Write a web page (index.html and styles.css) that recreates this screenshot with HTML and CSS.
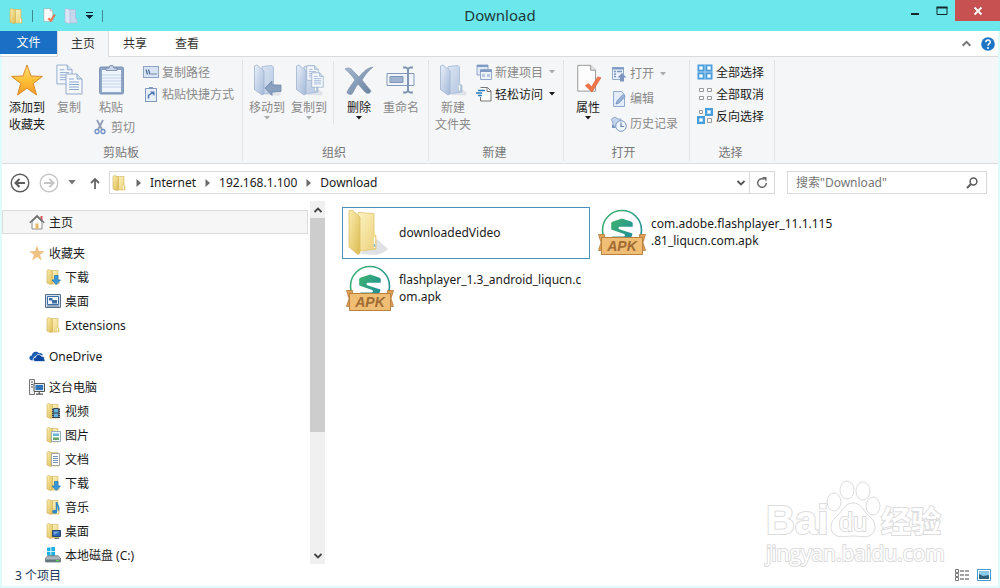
FILE: index.html
```
<!DOCTYPE html>
<html lang="zh-CN">
<head>
    <meta charset="UTF-8">
    <meta name="viewport" content="width=device-width, initial-scale=1.0">
    <title>Download</title>
    <link rel="stylesheet" href="styles.css">
</head>
<body>

<!-- Shared icons -->
<svg class="defs" aria-hidden="true">
    <defs>
        <linearGradient id="gold" x1="0" y1="0" x2="1" y2="1"><stop offset="0" stop-color="#fbeeb0"/><stop offset="1" stop-color="#dcb94f"/></linearGradient>
        <linearGradient id="goldBack" x1="0" y1="0" x2="1" y2="1"><stop offset="0" stop-color="#fdf3c1"/><stop offset="1" stop-color="#ebd07a"/></linearGradient>
        <linearGradient id="steel" x1="0" y1="0" x2="1" y2="1"><stop offset="0" stop-color="#e9f0f9"/><stop offset="1" stop-color="#a3b8d8"/></linearGradient>
        <linearGradient id="steelBack" x1="0" y1="0" x2="1" y2="1"><stop offset="0" stop-color="#d9e4f2"/><stop offset="1" stop-color="#b4c6e0"/></linearGradient>
        <linearGradient id="starFill" x1="0" y1="0" x2="0" y2="1"><stop offset="0" stop-color="#ffe27c"/><stop offset=".5" stop-color="#fdc038"/><stop offset="1" stop-color="#f59a23"/></linearGradient>
        <linearGradient id="teal" x1="0" y1="0" x2="1" y2="1"><stop offset="0" stop-color="#3fb56d"/><stop offset="1" stop-color="#1b85a0"/></linearGradient>
        <linearGradient id="cross" x1="0" y1="0" x2="1" y2="1"><stop offset="0" stop-color="#a9b9cf"/><stop offset="1" stop-color="#65809f"/></linearGradient>

        <symbol id="folder" viewBox="0 0 16 16">
            <path d="M6 1.500h7v9l1 .5v4H6z" fill="url(#goldBack)" stroke="#d5b65e" stroke-width=".6"/>
            <path d="M2 1.500 3.500.5 7.500 2v12.500L5.500 15.500 2 14z" fill="url(#gold)" stroke="#cfae50" stroke-width=".6"/>
            <path d="M12.500 11v3.500" stroke="#fff" stroke-width=".8"/>
        </symbol>
        <symbol id="folder-pale" viewBox="0 0 16 16">
            <path d="M6 1.500h6.500v9l1.500.5v4H6z" fill="#c5d6ee" stroke="#a9bcdc" stroke-width=".7"/>
            <path d="M2 1.500 3.500.5 7 2v12.500L5.500 15.500 2 14z" fill="#dbe5f5" stroke="#a9bcdc" stroke-width=".7"/>
        </symbol>
        <symbol id="folder-steel" viewBox="0 0 32 32">
            <path d="M13 31l16 .5 1-3-5-3z" fill="#dfe3e8"/>
            <path d="M11 2.500 21 1.500 22.500 3v17l2.500 1.500V28L12 30z" fill="url(#steelBack)" stroke="#a4b7d3" stroke-width=".8"/>
            <path d="M3.500 2 6 1l7 6v22.500L11 31 3.500 25.500z" fill="url(#steel)" stroke="#9db1cf" stroke-width=".8"/>
            <path d="M22.500 21.500V26" stroke="#fff" stroke-width="1.200"/>
        </symbol>
        <symbol id="page-steel" viewBox="0 0 18 22">
            <path d="M1 1h11l5 5v15H1z" fill="#f4f8fd" stroke="#93a9c9"/>
            <path d="M12 1v5h5" fill="#d5e0f0" stroke="#93a9c9"/>
            <path d="M4 6h5M4 9h10M4 11.500h10M4 14h10M4 16.500h10" stroke="#8ea8cd" stroke-width="1"/>
        </symbol>
        <symbol id="properties" viewBox="0 0 32 36">
            <path d="M4.500 1.500H19L24.500 7v23.500h-20z" fill="#fdfdfd" stroke="#8d8d8d"/>
            <path d="M19 1.500V7h5.500" fill="#e5e5e5" stroke="#8d8d8d"/>
            <path d="M13 24.500l3.500-2.500 3.500 3.500L27 14.500l3.500 1L20.500 31.500z" fill="#f0764a" stroke="#d9572c" stroke-width=".7"/>
        </symbol>
        <symbol id="star" viewBox="0 0 32 32">
            <path d="M16 1l4 11 11.500.4-9.200 7L25.500 31 16 24.200 6.500 31l3.200-11.600L.5 12.400 12 12z" stroke-linejoin="round"/>
        </symbol>
        <symbol id="down-arrow" viewBox="0 0 16 16">
            <path d="M9.500 6.500h3.500V11h2.500L11.200 15.500 7 11h2.500z" fill="#3a9bdc" stroke="#1d70ae" stroke-width=".7"/>
        </symbol>
        <symbol id="chevron" viewBox="0 0 10 10">
            <path d="M1.500 3 5 6.500 8.500 3" fill="none" stroke="currentColor" stroke-width="1.800"/>
        </symbol>
        <symbol id="caret" viewBox="0 0 6 4"><path d="M0 0h6L3 3.500z" fill="currentColor"/></symbol>
        <symbol id="crumb" viewBox="0 0 5 8"><path d="M.5 0v8L5 4z" fill="#6a6a6a"/></symbol>
        <symbol id="apk" viewBox="0 0 48 48">
            <circle cx="24" cy="21" r="19.500" fill="#fff" stroke="url(#teal)" stroke-width="1.600"/>
            <path d="M24 9.500l9 3c1.300.5 1.700 1 1.700 2v3.300H22c-2 0-2 2.200 0 2.800l12.500 4c-.5 5-5.500 8.400-10.500 10.400-5-2-8.500-4-10-7.500h11.500c2 0 2-2 0-2.700L13.200 20.500v-6c0-1 .4-1.500 1.700-2z" fill="url(#teal)"/>
            <path d="M.5 25.500h6v16h-6l2.500-8zM47.500 25.500h-6v16h6l-2.500-8z" fill="#dfa055" stroke="#b57b3a" stroke-width=".8"/>
            <path d="M3.500 28.500h41v17h-41z" fill="#efbd74" stroke="#bb8140"/>
            <text x="24" y="42" text-anchor="middle" class="apk-text">APK</text>
        </symbol>
    </defs>
</svg>

<div class="window">
    <header class="titlebar">
        <div class="quick">
            <svg class="i16"><use href="#folder"/></svg>
            <span class="bar"></span>
            <button aria-label="属性"><svg class="i16"><use href="#properties"/></svg></button>
            <button aria-label="新建文件夹"><svg class="i16"><use href="#folder-pale"/></svg></button>
            <button aria-label="自定义快速访问工具栏">
                <svg width="9" height="8" viewBox="0 0 9 8"><path d="M1 .5h7" stroke="#123"/><path d="M.5 3h8L4.500 7z" fill="#123"/></svg>
            </button>
            <span class="bar"></span>
        </div>
        <h1>Download</h1>
        <div class="controls">
            <button aria-label="最小化"><svg width="10" height="10"><path d="M1 8h8" stroke="#12282a" stroke-width="2"/></svg></button>
            <button aria-label="最大化"><svg width="12" height="10"><path d="M1 1.500h10v7H1z" fill="none" stroke="#12282a"/><path d="M.5 1.500h11" stroke="#12282a" stroke-width="2"/></svg></button>
            <button class="close" aria-label="关闭"><svg width="10" height="10"><path d="M1.500 1.500l7 7M8.500 1.500l-7 7" stroke="#fff" stroke-width="1.800"/></svg></button>
        </div>
    </header>

    <div class="tabs">
        <button class="tab file">文件</button>
        <button class="tab active">主页</button>
        <button class="tab">共享</button>
        <button class="tab">查看</button>
        <div class="tabs-right">
            <button aria-label="最小化功能区"><svg class="flip grey" width="11" height="11"><use href="#chevron"/></svg></button>
            <button aria-label="帮助">
                <svg width="14" height="14" viewBox="0 0 14 14"><circle cx="7" cy="7" r="6.800" fill="#1d74c4"/><path d="M4.800 5.300c0-3 4.500-3 4.500-.3C9.300 6.700 7 6.700 7 8.700" fill="none" stroke="#fff" stroke-width="1.500"/><circle cx="7" cy="10.900" r="1" fill="#fff"/></svg>
            </button>
        </div>
    </div>

    <div class="ribbon">
        <section class="group clipboard">
            <div class="tools">
                <button class="big">
                    <svg class="i32" fill="url(#starFill)" stroke="#d98a2b"><use href="#star"/></svg>
                    <span>添加到<br>收藏夹</span>
                </button>
                <button class="big off">
                    <svg class="i32" viewBox="0 0 32 32"><use href="#page-steel" x="3" y="0" width="17" height="21"/><use href="#page-steel" x="12" y="9" width="18" height="22"/></svg>
                    <span>复制</span>
                </button>
                <div class="stack">
                    <button class="big off">
                        <svg class="i32" viewBox="0 0 32 32">
                            <rect x="4.500" y="3" width="24" height="27" rx="1.500" fill="#8fa5c6" stroke="#7d94b8"/>
                            <path d="M7 6h19v22H7z" fill="#eff5fc"/>
                            <path d="M7 11h19M7 14h19M7 17h19M7 20h19M7 23h19" stroke="#c3d3e8"/>
                            <path d="M11 6.500V4h3l1-2.500h3L19 4h3v2.500z" fill="#c9d4e4" stroke="#7186a8" stroke-width=".8"/>
                        </svg>
                        <span>粘贴</span>
                    </button>
                    <button class="small off cut">
                        <svg class="i16" viewBox="0 0 16 16" fill="none"><path d="M5 1l5 9.500M11 1L6 10.500" stroke="#8f9db5" stroke-width="1.800"/><circle cx="5" cy="12.500" r="2" stroke="#6f8fc6" stroke-width="1.300"/><circle cx="11" cy="12.500" r="2" stroke="#6f8fc6" stroke-width="1.300"/></svg>
                        剪切
                    </button>
                </div>
                <div class="list">
                    <button class="small off">
                        <svg class="i16" viewBox="0 0 16 16"><rect x=".5" y="2.500" width="15" height="11" fill="#d8e3f3" stroke="#8ea3c4"/><path d="M3 5.500l1.500 5M5.500 5.500l1.500 5" stroke="#4d6a99" stroke-width="1.200"/><path d="M8.500 10h1M10.500 10h1M12.500 10h1" stroke="#4d6a99" stroke-width="1.400"/></svg>
                        复制路径
                    </button>
                    <button class="small off">
                        <svg class="i16" viewBox="0 0 16 16"><rect x="2.500" y="2.500" width="11" height="13" fill="#e6eefa" stroke="#8299c0"/><path d="M6 1h4v2H6z" fill="#8299c0"/><path d="M5.500 12.500V9.500L9 7" fill="none" stroke="#4f73b3" stroke-width="1.500"/><path d="M7 5.500h4.500V10z" fill="#4f73b3"/></svg>
                        粘贴快捷方式
                    </button>
                </div>
            </div>
            <h2>剪贴板</h2>
        </section>

        <section class="group organize">
            <div class="tools">
                <button class="big off">
                    <svg class="i32" viewBox="0 0 32 32"><use href="#folder-steel" width="32" height="32"/><path d="M14 24l7-7v4h9v6.500h-9v4z" fill="#8ba1c0" stroke="#7089ad" stroke-width=".8"/></svg>
                    <span>移动到</span>
                    <svg class="caret"><use href="#caret"/></svg>
                </button>
                <button class="big off">
                    <svg class="i32" viewBox="0 0 32 32"><use href="#folder-steel" width="32" height="32"/><use href="#page-steel" x="13" y="1" width="13" height="16"/><use href="#page-steel" x="18" y="8" width="13" height="16"/></svg>
                    <span>复制到</span>
                    <svg class="caret"><use href="#caret"/></svg>
                </button>
                <span class="divider"></span>
                <button class="big">
                    <svg class="i32" viewBox="0 0 32 32"><path d="M2 5c3-2 6-1 8 2l6 6c4-5 8-9 14-10-5 4-8 8-11 13 3 4 6 7 9 11-1 3-4 3-6 1l-7-8c-3 4-4 7-6 10-2 1-5 0-5-2 2-4 5-8 8-12C9 12 6 8 2 5z" fill="url(#cross)" stroke="#7389a9" stroke-width=".6"/></svg>
                    <span>删除</span>
                    <svg class="caret"><use href="#caret"/></svg>
                </button>
                <button class="big off">
                    <svg class="i32" viewBox="0 0 32 32"><path d="M2 9.500h27v12H2z" fill="#eff4fa" stroke="#8498b8"/><path d="M5 12.500h13v6H5z" fill="#9fb3d1" stroke="#8097bb"/><path d="M18 3.500h3l2 1.500 2-1.500h3M18 28.500h3l2-1.500 2 1.500h3M23 5v22" fill="none" stroke="#7f95b8" stroke-width="2"/></svg>
                    <span>重命名</span>
                </button>
            </div>
            <h2>组织</h2>
        </section>

        <section class="group new">
            <div class="tools">
                <button class="big off">
                    <svg class="i32"><use href="#folder-steel"/></svg>
                    <span>新建<br>文件夹</span>
                </button>
                <div class="list">
                    <button class="small off">
                        <svg class="i16" viewBox="0 0 16 16"><path d="M1 1h11v10H1z" fill="#dfe9f6" stroke="#93a9cb"/><path d="M1 2h11" stroke="#7f9ac4" stroke-width="2"/><path d="M4.500 5.500h11v10h-11z" fill="#edf3fb" stroke="#93a9cb"/><path d="M4 7h12" stroke="#7f9ac4" stroke-width="2"/><path d="M6 10h3v3H6zM11 10h3v3h-3z" fill="#b7c8e2"/></svg>
                        新建项目
                        <svg class="caret"><use href="#caret"/></svg>
                    </button>
                    <button class="small">
                        <svg class="i16" viewBox="0 0 16 16"><path d="M4.500 1.500h7l3.500 3.500v10H4.500V11" fill="#fff" stroke="#777"/><path d="M11 1.500V5.500h4" fill="none" stroke="#777"/><path d="M2 4.500h7M0 7h6M2 9.500h4" stroke="#287ab8" stroke-width="1.400"/></svg>
                        轻松访问
                        <svg class="caret"><use href="#caret"/></svg>
                    </button>
                </div>
            </div>
            <h2>新建</h2>
        </section>

        <section class="group open">
            <div class="tools">
                <button class="big">
                    <svg class="i32"><use href="#properties"/></svg>
                    <span>属性</span>
                    <svg class="caret"><use href="#caret"/></svg>
                </button>
                <div class="list wide">
                    <button class="small off">
                        <svg class="i16" viewBox="0 0 16 16"><path d="M1.500 1.500h11v12h-11z" fill="#eaf1fa" stroke="#93a9cb"/><path d="M1 2.500h12" stroke="#7f9ac4" stroke-width="2"/><path d="M3 5.500h2M3 8h2M3 10.500h2M6 5.500h5" stroke="#7c98c5" stroke-width="1.300"/><path d="M11 7l4.500 4.500H13V15.500H9v-4H6.500z" fill="#7c95bf"/></svg>
                        打开
                        <svg class="caret"><use href="#caret"/></svg>
                    </button>
                    <button class="small off">
                        <svg class="i16" viewBox="0 0 16 16"><path d="M2.500.5h8l3 3v12h-11z" fill="#e3ecf8" stroke="#93a9cb"/><path d="M5 13l1-3 6-6.500 2 2L8 12z" fill="#9bb3d8" stroke="#6f8dbb" stroke-width=".8"/></svg>
                        编辑
                    </button>
                    <button class="small off">
                        <svg class="i16" viewBox="0 0 16 16"><path d="M.5 3L4 1l3 2h3v7l-7 1z" fill="#c2d3ea" stroke="#93a9cb"/><circle cx="10" cy="10" r="5.300" fill="#eef4fc" stroke="#7f98c2"/><path d="M10 6.500V10.500h3" fill="none" stroke="#6482b3" stroke-width="1.200"/><path d="M1 8v4h4z" fill="#7f98c2"/></svg>
                        历史记录
                    </button>
                </div>
            </div>
            <h2>打开</h2>
        </section>

        <section class="group select">
            <div class="tools">
                <div class="list">
                    <button class="small">
                        <svg class="i16" viewBox="0 0 16 16"><path d="M.5.5h15v15H.5z" fill="#4a9ddb"/><path d="M8 0v16M0 8h16" stroke="#a8d1f2" stroke-width="1"/><path d="M2.500 2.500h3v3h-3zM10.500 2.500h3v3h-3zM2.500 10.500h3v3h-3zM10.500 10.500h3v3h-3z" fill="#fff" stroke="#b5dbf7"/></svg>
                        全部选择
                    </button>
                    <button class="small">
                        <svg class="i16" viewBox="0 0 16 16"><path d="M2.500 2.500h4v3h-4zM10.500 2.500h4v3h-4zM2.500 10.500h4v3h-4zM10.500 10.500h4v3h-4z" fill="#fff" stroke="#999"/></svg>
                        全部取消
                    </button>
                    <button class="small">
                        <svg class="i16" viewBox="0 0 16 16"><path d="M8 0h8v8H8zM0 8h8v8H0z" fill="#4a9ddb"/><path d="M10.500 2.500h3v3h-3zM2.500 10.500h3v3h-3z" fill="#fff" stroke="#b5dbf7"/><path d="M2.500 2.500h3v3h-3zM10.500 10.500h4v4h-4z" fill="#fff" stroke="#999"/></svg>
                        反向选择
                    </button>
                </div>
            </div>
            <h2>选择</h2>
        </section>
    </div>

    <div class="location">
        <button aria-label="返回"><svg width="20" height="20" viewBox="0 0 20 20" fill="none" stroke="#5c5c5c"><circle cx="10" cy="10" r="8.800" stroke-width="1.400"/><path d="M15 10H6M9.500 6L5.500 10l4 4" stroke-width="2"/></svg></button>
        <button aria-label="前进"><svg width="20" height="20" viewBox="0 0 20 20" fill="none" stroke="#c6c6c6"><circle cx="10" cy="10" r="8.800" stroke-width="1.400"/><path d="M5 10h9M10.500 6l4 4-4 4" stroke-width="2"/></svg></button>
        <button class="recent" aria-label="最近浏览的位置"><svg width="8" height="5"><use href="#caret"/></svg></button>
        <button class="up" aria-label="上移"><svg width="10" height="12" viewBox="0 0 10 12"><path d="M5 12V2M1 6l4-4 4 4" fill="none" stroke="#666" stroke-width="1.800"/></svg></button>
        <nav class="address">
            <svg class="i16"><use href="#folder"/></svg>
            <svg class="crumb"><use href="#crumb"/></svg>
            <a href="#">Internet</a>
            <svg class="crumb"><use href="#crumb"/></svg>
            <a href="#">192.168.1.100</a>
            <svg class="crumb"><use href="#crumb"/></svg>
            <a href="#">Download</a>
            <button class="history" aria-label="以前的位置"><svg width="10" height="10"><use href="#chevron"/></svg></button>
            <button class="refresh" aria-label="刷新">
                <svg width="12" height="12" viewBox="0 0 12 12"><path d="M8 2.200A4.300 4.300 0 1 0 10.300 6" fill="none" stroke="#6a6a6a" stroke-width="1.500"/><path d="M6 0h4.500v4.500z" fill="#6a6a6a"/></svg>
            </button>
        </nav>
        <form class="search">
            <input type="text" placeholder='搜索"Download"' aria-label="搜索">
            <button type="button" aria-label="搜索"><svg width="12" height="12" viewBox="0 0 12 12" fill="none" stroke="#5c5c5c"><circle cx="7.500" cy="4.500" r="3.400" stroke-width="1.500"/><path d="M5 7L1 11" stroke-width="2"/></svg></button>
        </form>
    </div>

    <main class="content">
        <nav class="tree">
            <ul>
                <li class="home"><a href="#">
                    <svg class="i16" viewBox="0 0 16 16"><path d="M11.500 2h2v4h-2z" fill="#d9534f"/><path d="M3 8v7h10V8L8 3z" fill="#fff" stroke="#8a8a8a"/><path d="M.8 8.800L8 1.800l7.200 7" fill="none" stroke="#6e6e6e" stroke-width="1.400"/><path d="M6.500 9.500h3V15h-3z" fill="#e9b86a"/></svg>
                    主页</a></li>
                <li class="root"><a href="#"><svg class="i16" fill="#edc284"><use href="#star"/></svg>收藏夹</a></li>
                <li><a href="#"><svg class="i16"><use href="#folder"/><use href="#down-arrow"/></svg>下载</a></li>
                <li><a href="#">
                    <svg class="i16" viewBox="0 0 16 16"><path d="M.5 1.500h15v13H.5z" fill="#d6e1ee" stroke="#55708f"/><path d="M2.500 3.500h11v8h-11z" fill="#f2f6fb" stroke="#3c6ea5"/><path d="M4 5h3.500v2.500H4zM7 7h5v3.500H7z" fill="#3c6ea5"/><path d="M2 13h12" stroke="#55708f"/></svg>
                    桌面</a></li>
                <li><a href="#"><svg class="i16"><use href="#folder"/></svg>Extensions</a></li>
                <li class="root"><a href="#">
                    <svg class="i16" viewBox="0 0 16 16"><path d="M3.500 12.500C-.5 12.500-.5 8 2.800 7.600 3 3.500 8 2.500 9.800 5.200 12 4.500 14 6 13.800 7.500L9 6.500 5 9z" fill="#1b5cb0"/><path d="M6.500 13.500c-3-.3-2.800-4 0-4.200.3-3.400 5-3.600 6-1 3-.2 3.500 2 2.400 2.400 1.800.8 1.300 2.800-.4 2.800z" fill="#0d47a0" stroke="#fff" stroke-width=".7"/></svg>
                    OneDrive</a></li>
                <li class="root"><a href="#">
                    <svg class="i16" viewBox="0 0 16 16"><path d="M.5.5h5v15h-5z" fill="#f2f2f2" stroke="#777"/><path d="M2 3h2M2 5.500h2M2 8h2" stroke="#555"/><path d="M5 4.500h10.500v8H5z" fill="#dce8f5" stroke="#555"/><path d="M6.500 6h7.500v5H6.500z" fill="#2f72b8"/><path d="M10.200 12.500V15M7 15.200h7" stroke="#555" stroke-width="1.200"/></svg>
                    这台电脑</a></li>
                <li><a href="#"><svg class="i16" viewBox="0 0 16 16"><use href="#folder"/><path d="M7 5h8v10H7z" fill="#35424c"/><path d="M9 6h4v3.500H9zM9 10.500h4V14H9z" fill="#62b1dc"/><path d="M7.800 5v10M14.200 5v10" stroke="#eee" stroke-width=".8" stroke-dasharray="1"/></svg>视频</a></li>
                <li><a href="#"><svg class="i16" viewBox="0 0 16 16"><use href="#folder"/><path d="M6.500 4.500h9v10h-9z" fill="#f2f9fd" stroke="#98adb9"/><path d="M8 6.500h6v2.500H8z" fill="#63b5d4"/><path d="M8 10.500h6V13H8z" fill="#68a66b"/></svg>图片</a></li>
                <li><a href="#"><svg class="i16" viewBox="0 0 16 16"><use href="#folder"/><path d="M6.500 2.500h8v12h-8z" fill="#fff" stroke="#a5a5a5"/><path d="M8 5.500h5M8 7.500h5M8 9.500h5M8 11.500h5" stroke="#7692b9"/></svg>文档</a></li>
                <li><a href="#"><svg class="i16"><use href="#folder"/><use href="#down-arrow"/></svg>下载</a></li>
                <li><a href="#"><svg class="i16" viewBox="0 0 16 16"><use href="#folder"/><path d="M11.500 3.500c0 2.500 3.500 3.500 2 8" fill="none" stroke="#2e88c4" stroke-width="1.500"/><path d="M11.500 3v9.500" stroke="#2e88c4" stroke-width="1.500"/><ellipse cx="9.700" cy="12.700" rx="2.600" ry="2" fill="#2e88c4"/></svg>音乐</a></li>
                <li><a href="#"><svg class="i16" viewBox="0 0 16 16"><use href="#folder"/><path d="M7.500 7.500h8v6h-8z" fill="#2c66b4" stroke="#2b4466"/><path d="M8.500 8.500h6L9 12z" fill="#76a7df"/><path d="M9.500 15.300h4.500" stroke="#456"/></svg>桌面</a></li>
                <li><a href="#"><svg class="i16" viewBox="0 0 16 16"><path d="M2 .8l3.500-.5v4H2zM6.300.2 10-.3v4.600H6.300zM2 5h3.500v4L2 8.600zM6.300 5H10v4.600L6.300 9.200z" fill="#18b1e0"/><path d="M.5 11L3 8.800h10l2.500 2.200v4H.5z" fill="#aab5bb" stroke="#68747a" stroke-width=".8"/><path d="M1 12.500h14v2.200H1z" fill="#62727a"/><path d="M11 13.600h3" stroke="#4fd54a" stroke-width="1.300"/></svg>本地磁盘 (C:)</a></li>
            </ul>
            <div class="scrollbar">
                <button aria-label="向上滚动"><svg class="flip" width="10" height="10"><use href="#chevron"/></svg></button>
                <div class="track"><div class="thumb"></div></div>
                <button aria-label="向下滚动"><svg width="10" height="10"><use href="#chevron"/></svg></button>
            </div>
        </nav>

        <ul class="files">
            <li><a class="item selected" href="#">
                <svg class="i48" viewBox="0 0 48 48">
                    <path d="M14 45l16 1c5-1 9-3 12-6L31 30z" fill="#dfe1e4"/>
                    <path d="M12 3.500L28 4.500V25l2 2v13L14 42z" fill="url(#goldBack)" stroke="#e0c56e" stroke-width=".8"/>
                    <path d="M3 2l3-1 8 7v36l-2 1.500L3 38z" fill="url(#gold)" stroke="#dcc068" stroke-width=".8"/>
                    <path d="M28.500 28v11" stroke="#fff" stroke-width="1.400"/>
                    <path d="M28.500 35v3" stroke="#8db9d0" stroke-width="1.400"/>
                </svg>
                <span>downloadedVideo</span></a></li>
            <li><a class="item" href="#"><svg class="i48"><use href="#apk"/></svg><span>com.adobe.flashplayer_11.1.115<br>.81_liqucn.com.apk</span></a></li>
            <li><a class="item" href="#"><svg class="i48"><use href="#apk"/></svg><span>flashplayer_1.3_android_liqucn.c<br>om.apk</span></a></li>
        </ul>
    </main>

    <footer class="status">
        <span>3 个项目</span>
        <div class="views">
            <button aria-label="详细信息"><svg width="16" height="12" viewBox="0 0 16 12"><path d="M1.500.5h3v3h-3zM1.500 4.500h3v3h-3zM1.500 8.500h3v3h-3z" fill="#fff" stroke="#777"/><path d="M6 2h4M11 2h4M6 6h4M11 6h4M6 10h4M11 10h4" stroke="#444"/></svg></button>
            <button aria-label="大图标"><svg width="14" height="12" viewBox="0 0 14 12"><path d="M.5.5h13v11H.5z" fill="#fff" stroke="#4a9ad0"/><path d="M2 2h10v8H2z" fill="#8cc8e8"/><path d="M2 5l4 2 6-1v4H2z" fill="#2d6178"/></svg></button>
        </div>
    </footer>

    <svg class="watermark" width="190" height="92" viewBox="0 0 190 92" aria-hidden="true">
        <ellipse cx="70" cy="25" rx="7" ry="9"/>
        <ellipse cx="83" cy="13" rx="7" ry="9"/>
        <ellipse cx="99" cy="14" rx="7" ry="9"/>
        <ellipse cx="109" cy="29" rx="7" ry="9"/>
        <path d="M89 26c-8 0-10 7-15 12-7 5-9 13-5 18 5 6 12 3 20 3s15 3 20-3c4-5 2-13-5-18-5-5-7-12-15-12z"/>
        <text class="wm-big" x="2" y="57">Bai</text>
        <text class="wm-du" x="75" y="54">du</text>
        <text class="wm-cn" x="117" y="55">经验</text>
        <text class="wm-url" x="2" y="84">jingyan.baidu.com</text>
    </svg>
</div>

</body>
</html>
```
FILE: styles.css
```
* {
    box-sizing: border-box;
}

body {
    margin: 0;
    font-family: "Noto Sans", "Noto Sans CJK SC", sans-serif;
    font-size: 12px;
    line-height: 17px;
    color: #1a1a1a;
    background-color: #fff;
}

h1, h2, ul {
    margin: 0;
    padding: 0;
    font-weight: normal;
    list-style: none;
}

a {
    color: inherit;
    text-decoration: none;
}

button {
    display: flex;
    align-items: center;
    justify-content: center;
    padding: 0;
    border: none;
    background: none;
    font: inherit;
    color: inherit;
}

svg {
    flex: none;
}

.defs {
    position: absolute;
    width: 0;
    height: 0;
}

.i16 {
    width: 16px;
    height: 16px;
}

.i32 {
    width: 32px;
    height: 32px;
}

.i48 {
    width: 48px;
    height: 48px;
}

.flip {
    transform: rotate(180deg);
}

.grey {
    color: #777;
}

.caret {
    width: 6px;
    height: 4px;
}

.window {
    position: relative;
    display: flex;
    flex-direction: column;
    height: 100vh;
    border: 2px solid #dffcfc;
    border-top: none;
}

/* title bar */
.titlebar {
    display: grid;
    grid-template-columns: 1fr auto 1fr;
    align-items: start;
    height: 31px;
    margin: 0 -2px;
    background-color: #6ce8ec;
}

.quick {
    display: flex;
    align-items: center;
    gap: 6px;
    height: 31px;
    padding-left: 8px;
}

.bar {
    width: 1px;
    height: 12px;
    margin: 0 2px;
    background-color: #3d8c90;
}

.titlebar h1 {
    font-size: 15px;
    line-height: 31px;
    color: #1d3b3c;
}

.controls {
    display: flex;
    justify-content: flex-end;
}

.controls button {
    width: 27px;
    height: 21px;
}

.controls .close {
    width: 45px;
    background-color: #c75050;
}

/* tabs */
.tabs {
    display: flex;
    height: 26px;
    margin-left: -2px;
    border-bottom: 1px solid #dadbdc;
}

.tab {
    width: 52px;
    height: 25px;
    color: #333;
}

.tab.file {
    width: 57px;
    height: 23px;
    background-color: #1b6fc4;
    color: #fff;
}

.tab.active {
    height: 26px;
    padding-bottom: 1px;
    border: 1px solid #dadbdc;
    border-width: 0 1px;
    background-color: #f5f6f7;
}

.tabs-right {
    display: flex;
    gap: 9px;
    margin-left: auto;
    padding-right: 3px;
}

/* ribbon */
.ribbon {
    display: flex;
    height: 107px;
    padding-left: 1px;
    border-bottom: 1px solid #dadbdc;
    background-color: #f5f6f7;
}

.group {
    display: flex;
    flex-direction: column;
    justify-content: space-between;
    margin: 3px 0 2px;
    padding: 1px 8px 0 5px;
    border-right: 1px solid #e2e3e4;
}

.group h2 {
    font-size: 12px;
    text-align: center;
    color: #777;
}

.tools {
    display: flex;
    align-items: flex-start;
    gap: 4px;
}

.big {
    flex-direction: column;
    min-width: 38px;
    padding-top: 3px;
}

.big span {
    padding-top: 3px;
}

.small {
    gap: 3px;
    height: 22px;
}

.small .caret {
    margin-left: 3px;
}

.off {
    color: #8a8a8a;
}

.off .caret {
    color: #aaa;
}

.stack, .list {
    display: flex;
    flex-direction: column;
    align-items: flex-start;
}

.stack {
    padding-right: 4px;
}

.stack .big {
    min-width: 34px;
    margin-left: 2px;
}

.wide .small {
    height: 25px;
}

.open {
    padding-right: 11px;
}

.select {
    padding: 1px 10px 0 7px;
}

.divider {
    width: 1px;
    height: 63px;
    margin: 0 2px 0 1px;
    background-color: #e2e3e4;
}

/* address row */
.location {
    display: flex;
    align-items: center;
    height: 37px;
    padding: 0 11px 0 8px;
    gap: 9px;
}

.recent {
    color: #777;
}

.up {
    padding-left: 5px;
}

.address {
    display: flex;
    flex: 1;
    align-items: center;
    gap: 9px;
    height: 23px;
    padding-left: 1px;
    border: 1px solid #d9d9d9;
}

.crumb {
    width: 5px;
    height: 8px;
}

.address .history {
    margin-left: auto;
    color: #555;
}

.refresh {
    width: 25px;
    height: 21px;
    margin-left: -6px;
    border-left: 1px solid #d9d9d9;
}

.search {
    display: flex;
    align-items: center;
    width: 200px;
    height: 23px;
    margin-left: 3px;
    padding: 0 8px;
    border: 1px solid #d9d9d9;
}

.search input {
    flex: 1;
    min-width: 0;
    padding: 0;
    border: none;
    outline: none;
    font: inherit;
}

.search input::placeholder {
    color: #757575;
}

/* panes */
.content {
    display: flex;
    flex: 1;
    min-height: 0;
}

.tree {
    display: flex;
    width: 323px;
}

.tree ul {
    flex: 1;
    padding-top: 9px;
    overflow: hidden;
}

.tree li a {
    display: flex;
    align-items: center;
    gap: 4px;
    height: 24px;
    padding-left: 43px;
}

.tree .home a {
    padding-left: 26px;
    border: 1px solid #dcdcdc;
    background-color: #f6f6f6;
    margin-right: 2px;
}

.tree .root a {
    margin-top: 7px;
    padding-left: 27px;
}

.scrollbar {
    display: flex;
    flex-direction: column;
    width: 15px;
    background-color: #f0f0f0;
    color: #444;
}

.scrollbar button {
    height: 17px;
}

.track {
    flex: 1;
}

.thumb {
    height: 65%;
    background-color: #cdcdcd;
}

.files {
    display: grid;
    flex: 1;
    grid-template-columns: repeat(auto-fill, 248px);
    align-content: start;
    gap: 4px;
    padding: 6px 17px;
}

.item {
    display: flex;
    align-items: center;
    gap: 5px;
    height: 52px;
    padding: 0 3px;
    border: 1px solid transparent;
}

.item span {
    padding-bottom: 2px;
}

.item.selected {
    border-color: #4a90b8;
}

.apk-text {
    font: italic bold 14px "Liberation Sans", sans-serif;
    fill: #a06c33;
}

/* status bar */
.status {
    display: flex;
    align-items: center;
    justify-content: space-between;
    height: 22px;
    padding: 0 7px 0 13px;
    color: #1e395b;
}

.views {
    display: flex;
    gap: 7px;
}

.watermark {
    position: absolute;
    right: 44px;
    bottom: 17px;
    fill: #fff;
    stroke: #dcdcdc;
    stroke-width: 1px;
}

.watermark text {
    paint-order: stroke;
    stroke-width: 2px;
    font-family: "Liberation Sans", "Noto Sans CJK SC", sans-serif;
    font-weight: bold;
}

.wm-big {
    font-size: 40px;
}

.watermark .wm-du {
    font-size: 25px;
    font-weight: normal;
}

.wm-cn {
    font-size: 30px;
}

.watermark .wm-url {
    font-family: "Open Sans", sans-serif;
    font-size: 21px;
    font-weight: normal;
}
```
